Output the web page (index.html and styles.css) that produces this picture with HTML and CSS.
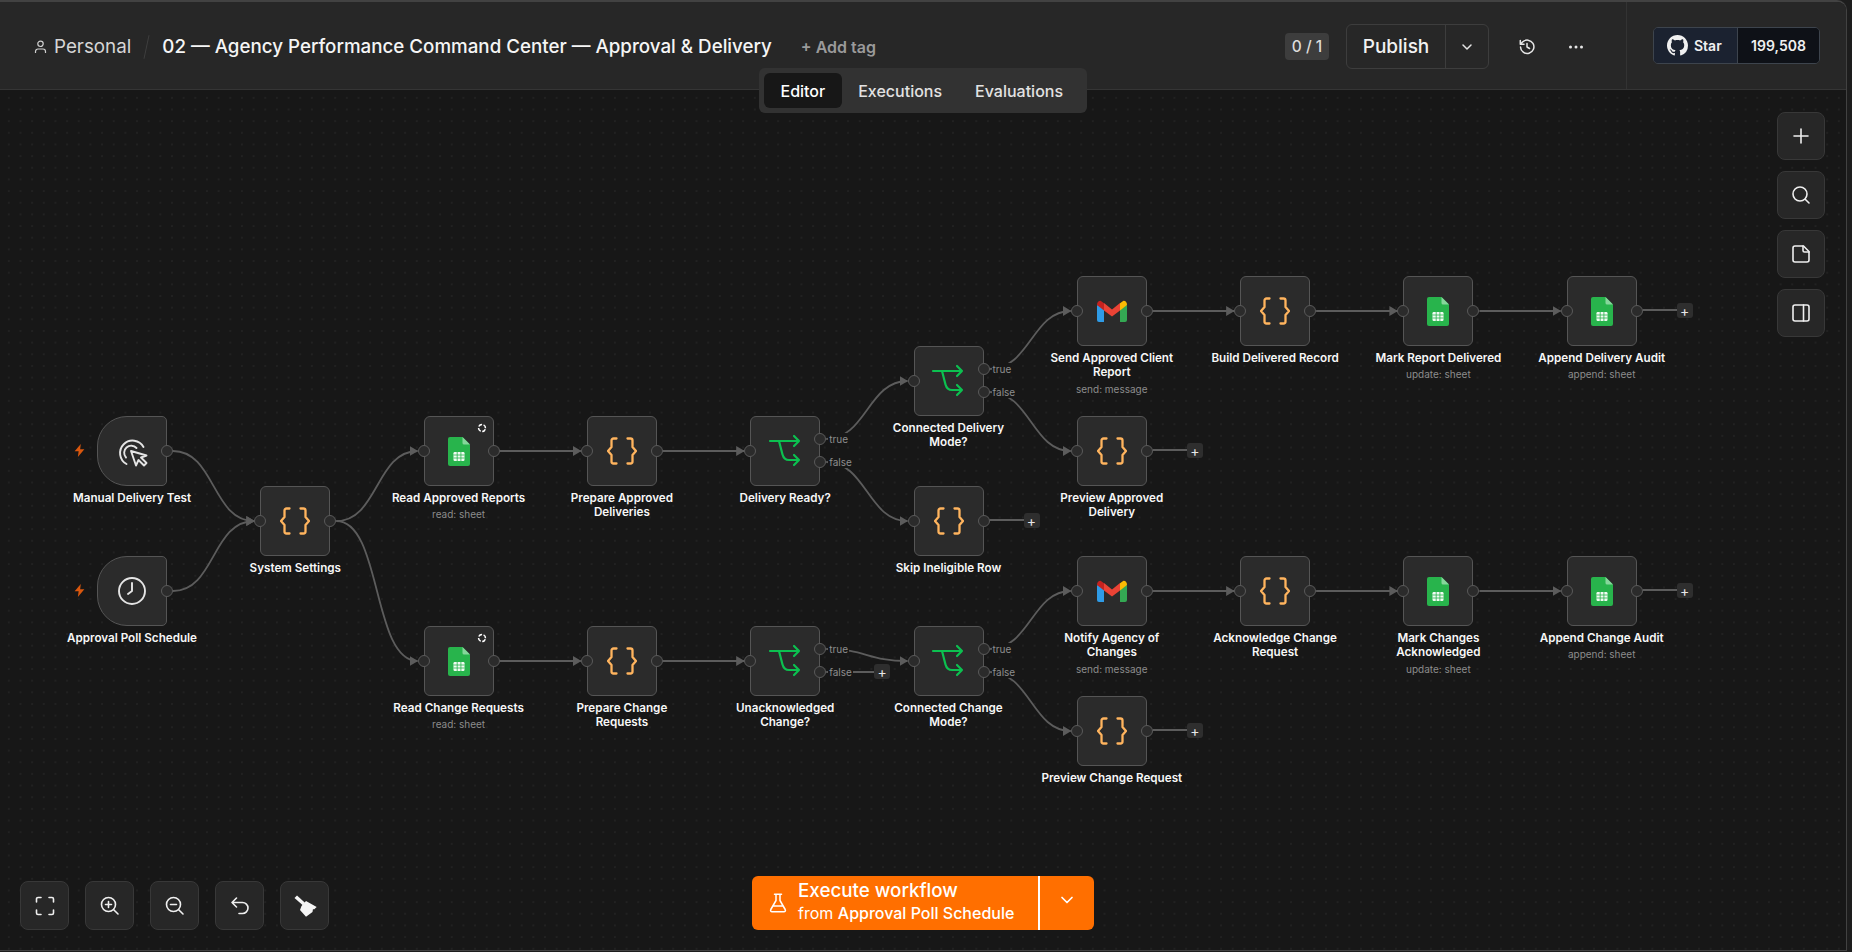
FILE: index.html
```html
<!DOCTYPE html>
<html lang="en">
<head>
    <meta charset="UTF-8">
    <title>02 — Agency Performance Command Center — Approval &amp; Delivery</title>
    <link rel="stylesheet" href="styles.css">
</head>
<body>
    <!-- shared node icons -->
    <svg class="sprite" aria-hidden="true">
        <symbol id="i-code" viewBox="0 0 30 28">
            <path d="M9.500 1.500H6.500a2 2 0 0 0-2 2V10L1 14l3.500 4v6.500a2 2 0 0 0 2 2h3M20.500 1.500h3a2 2 0 0 1 2 2V10L29 14l-3.500 4v6.500a2 2 0 0 1-2 2h-3" fill="none" stroke="#ffb45e" stroke-width="2.300" stroke-linecap="round" stroke-linejoin="round"/>
        </symbol>
        <symbol id="i-if" viewBox="0 0 70 70">
            <path d="M20 25H49M44 20l5 5-5 5M29 25l3.500 13.500Q34 44 39 44H49M44 39l5 5-5 5" fill="none" stroke="#0cc050" stroke-width="2.200" stroke-linecap="round" stroke-linejoin="round"/>
        </symbol>
        <symbol id="i-sheet" viewBox="0 0 22 29">
            <path d="M2 0H14.500L22 7.500V27a2 2 0 0 1-2 2H2a2 2 0 0 1-2-2V2a2 2 0 0 1 2-2Z" fill="#28b44c"/>
            <path d="M14.500 0L22 7.500H16a1.500 1.500 0 0 1-1.500-1.500Z" fill="#86d69b"/>
            <rect x="5.500" y="15" width="11" height="9" rx="1.200" fill="#f2fbf4"/>
            <path d="M5.500 18H16.500M5.500 21H16.500M9.200 15V24M12.900 15V24" stroke="#28b44c" stroke-width="0.800"/>
        </symbol>
        <symbol id="i-gmail" viewBox="0 0 30 22">
            <path d="M0 5V20a2 2 0 0 0 2 2H7V8Z" fill="#2f9be6"/>
            <path d="M30 5V20a2 2 0 0 1-2 2H23V8Z" fill="#34a853"/>
            <path d="M7 3L15 9.500 23 3V10.500L15 16.500 7 10.500Z" fill="#ea4335"/>
            <path d="M0 5Q0 1 3.500 .8L7 3.200V10.500Z" fill="#c5221f"/>
            <path d="M23 3.200L26.500 .8Q30 1 30 5L23 10.500Z" fill="#fbbc04"/>
        </symbol>
        <symbol id="i-bolt" viewBox="0 0 10 12">
            <path d="M6.200 0L.5 6.800H4.200L3.500 12 9.500 4.800H5.600Z" fill="#d9570e"/>
        </symbol>
        <symbol id="i-poll" viewBox="0 0 10 10">
            <circle cx="5" cy="5" r="3.500" fill="none" stroke="#fff" stroke-width="1.500" stroke-dasharray="3.900 1.600" transform="rotate(20 5 5)"/>
        </symbol>
    </svg>

    <div class="app">
        <header class="topbar">
            <div class="crumbs">
                <svg class="person" width="13" height="14" viewBox="0 0 13 14" fill="none" stroke="#cfcfcf" stroke-width="1.200"><circle cx="6.500" cy="3.800" r="2.700"/><path d="M1.500 13v-1.500a2.500 2.500 0 0 1 2.500-2.500h5a2.500 2.500 0 0 1 2.500 2.500V13"/></svg>
                <span class="project">Personal</span>
                <span class="slash"></span>
                <span class="title">02 — Agency Performance Command Center — Approval &amp; Delivery</span>
                <span class="add-tag">+ Add tag</span>
            </div>
            <div class="actions">
                <span class="counter">0 / 1</span>
                <div class="publish">
                    <span class="publish-label">Publish</span>
                    <span class="publish-more">
                        <svg width="14" height="14" viewBox="0 0 14 14" fill="none" stroke="#e6e6e6" stroke-width="1.500" stroke-linecap="round" stroke-linejoin="round"><path d="M3 5l4 4 4-4"/></svg>
                    </span>
                </div>
                <svg class="history" width="18" height="18" viewBox="0 0 18 18" fill="none" stroke="#e6e6e6" stroke-width="1.500" stroke-linecap="round" stroke-linejoin="round"><path d="M2.500 9A6.700 6.700 0 1 0 4.500 4L2.300 6.200M2.300 2.500v3.700H6M9 5.500V9l2.500 1.500"/></svg>
                <svg class="dots" width="16" height="4" viewBox="0 0 16 4" fill="#e6e6e6"><circle cx="2.500" cy="2" r="1.500"/><circle cx="8" cy="2" r="1.500"/><circle cx="13.500" cy="2" r="1.500"/></svg>
            </div>
            <div class="star-wrap">
                <div class="gh-star">
                    <span class="gh-left">
                        <svg width="21" height="21" viewBox="0 0 16 16" fill="#f0f0f0"><path d="M8 0C3.580 0 0 3.580 0 8c0 3.540 2.290 6.530 5.470 7.590.4.070.55-.17.55-.38 0-.19-.01-.82-.01-1.490-2.010.37-2.530-.49-2.690-.94-.09-.23-.48-.94-.82-1.130-.28-.15-.68-.52-.01-.53.63-.01 1.080.58 1.230.82.72 1.210 1.870.87 2.330.66.07-.52.28-.87.51-1.070-1.780-.2-3.640-.89-3.640-3.950 0-.87.31-1.590.82-2.150-.08-.2-.36-1.020.08-2.120 0 0 .67-.21 2.200.82.64-.18 1.320-.27 2-.27.68 0 1.360.09 2 .27 1.530-1.040 2.200-.82 2.200-.82.44 1.100.16 1.920.08 2.120.51.56.82 1.270.82 2.150 0 3.070-1.870 3.750-3.650 3.950.29.25.54.73.54 1.480 0 1.070-.01 1.930-.01 2.200 0 .21.15.46.55.38A8.013 8.013 0 0016 8c0-4.420-3.580-8-8-8z"/></svg>
                        Star
                    </span>
                    <span class="gh-count">199,508</span>
                </div>
            </div>
        </header>

        <nav class="tabs">
            <span class="tab active">Editor</span>
            <span class="tab">Executions</span>
            <span class="tab">Evaluations</span>
        </nav>

        <main class="canvas">
            <!-- connections, drawn in page coordinates -->
            <svg class="edges" viewBox="0 90 1846 860">
                <defs>
                    <marker id="arrow" markerUnits="userSpaceOnUse" markerWidth="9" markerHeight="11" refX="8" refY="5.500" orient="auto">
                        <path d="M0 .5L8.500 5.500 0 10.500Z" fill="#5c5c5c"/>
                    </marker>
                </defs>
                <g class="edge-arrow">
                    <path d="M173 451C215 451 212 521 254.300 521"/>
                    <path d="M173 591C215 591 212 521 254.300 521"/>
                    <path d="M336.300 521C378 521 376 451 417.600 451"/>
                    <path d="M336.300 521C382 521 372 661 417.600 661"/>
                    <path d="M499.600 451H580.900"/>
                    <path d="M662.900 451H744.200"/>
                    <path d="M826.200 439C866 439 868 381 907.500 381"/>
                    <path d="M826.200 462C866 462 868 521 907.500 521"/>
                    <path d="M989.500 369C1030 369 1032 311 1070.800 311"/>
                    <path d="M989.500 392C1030 392 1032 451 1070.800 451"/>
                    <path d="M1152.800 311H1234.100"/>
                    <path d="M1316.100 311H1397.400"/>
                    <path d="M1479.400 311H1560.700"/>
                    <path d="M499.600 661H580.900"/>
                    <path d="M662.900 661H744.200"/>
                    <path d="M826.200 649C866 649 868 661 907.500 661"/>
                    <path d="M989.500 649C1030 649 1032 591 1070.800 591"/>
                    <path d="M989.500 672C1030 672 1032 731 1070.800 731"/>
                    <path d="M1152.800 591H1234.100"/>
                    <path d="M1316.100 591H1397.400"/>
                    <path d="M1479.400 591H1560.700"/>
                </g>
                <g class="edge-stub">
                    <path d="M1642.700 310H1678"/>
                    <path d="M1152.800 450H1188"/>
                    <path d="M989.500 520H1024"/>
                    <path d="M826.200 672H875"/>
                    <path d="M1642.700 590H1678"/>
                    <path d="M1152.800 730H1188"/>
                </g>
            </svg>

            <!-- triggers -->
            <div class="node c0 r2">
                <svg class="bolt"><use href="#i-bolt"/></svg>
                <div class="box trigger">
                    <svg class="ico-click" width="30" height="29" viewBox="0 0 30 29" fill="none" stroke="#e4e4e4" stroke-width="1.900" stroke-linecap="round" stroke-linejoin="round">
                        <path d="M8.500 26A12.500 12.500 0 1 1 25.500 9"/>
                        <path d="M8 19.500A7 7 0 1 1 18.500 10"/>
                        <path d="M13 13L18 27.500 20.500 22 26 27.500 28.500 25 23 19.500 28.500 17.500Z"/>
                    </svg>
                </div>
                <span class="port out"></span>
                <div class="label">Manual Delivery Test</div>
            </div>
            <div class="node c0 r4">
                <svg class="bolt"><use href="#i-bolt"/></svg>
                <div class="box trigger">
                    <svg width="28" height="28" viewBox="0 0 28 28" fill="none" stroke="#e4e4e4" stroke-width="1.900" stroke-linecap="round" stroke-linejoin="round">
                        <circle cx="14" cy="14" r="13"/>
                        <path d="M14 6V14L10 17"/>
                    </svg>
                </div>
                <span class="port out"></span>
                <div class="label">Approval Poll Schedule</div>
            </div>

            <div class="node c1 r3">
                <span class="port in"></span>
                <div class="box"><svg class="ico-code"><use href="#i-code"/></svg></div>
                <span class="port out"></span>
                <div class="label">System Settings</div>
            </div>

            <!-- approved reports branch -->
            <div class="node c2 r2">
                <span class="port in"></span>
                <div class="box">
                    <svg class="ico-sheet"><use href="#i-sheet"/></svg>
                    <svg class="poll"><use href="#i-poll"/></svg>
                </div>
                <span class="port out"></span>
                <div class="label">Read Approved Reports<div class="sub">read: sheet</div></div>
            </div>
            <div class="node c3 r2">
                <span class="port in"></span>
                <div class="box"><svg class="ico-code"><use href="#i-code"/></svg></div>
                <span class="port out"></span>
                <div class="label">Prepare Approved Deliveries</div>
            </div>
            <div class="node c4 r2">
                <span class="port in"></span>
                <div class="box"><svg class="ico-if"><use href="#i-if"/></svg></div>
                <span class="port out-true"></span><span class="port out-false"></span>
                <span class="branch is-true">true</span><span class="branch is-false">false</span>
                <div class="label">Delivery Ready?</div>
            </div>
            <div class="node c5 r1">
                <span class="port in"></span>
                <div class="box"><svg class="ico-if"><use href="#i-if"/></svg></div>
                <span class="port out-true"></span><span class="port out-false"></span>
                <span class="branch is-true">true</span><span class="branch is-false">false</span>
                <div class="label">Connected Delivery Mode?</div>
            </div>
            <div class="node c5 r3">
                <span class="port in"></span>
                <div class="box"><svg class="ico-code"><use href="#i-code"/></svg></div>
                <span class="port out"></span>
                <span class="plus">+</span>
                <div class="label">Skip Ineligible Row</div>
            </div>
            <div class="node c6 r0">
                <span class="port in"></span>
                <div class="box"><svg class="ico-gmail"><use href="#i-gmail"/></svg></div>
                <span class="port out"></span>
                <div class="label">Send Approved Client Report<div class="sub">send: message</div></div>
            </div>
            <div class="node c6 r2">
                <span class="port in"></span>
                <div class="box"><svg class="ico-code"><use href="#i-code"/></svg></div>
                <span class="port out"></span>
                <span class="plus">+</span>
                <div class="label">Preview Approved Delivery</div>
            </div>
            <div class="node c7 r0">
                <span class="port in"></span>
                <div class="box"><svg class="ico-code"><use href="#i-code"/></svg></div>
                <span class="port out"></span>
                <div class="label">Build Delivered Record</div>
            </div>
            <div class="node c8 r0">
                <span class="port in"></span>
                <div class="box"><svg class="ico-sheet"><use href="#i-sheet"/></svg></div>
                <span class="port out"></span>
                <div class="label">Mark Report Delivered<div class="sub">update: sheet</div></div>
            </div>
            <div class="node c9 r0">
                <span class="port in"></span>
                <div class="box"><svg class="ico-sheet"><use href="#i-sheet"/></svg></div>
                <span class="port out"></span>
                <span class="plus">+</span>
                <div class="label">Append Delivery Audit<div class="sub">append: sheet</div></div>
            </div>

            <!-- change requests branch -->
            <div class="node c2 r5">
                <span class="port in"></span>
                <div class="box">
                    <svg class="ico-sheet"><use href="#i-sheet"/></svg>
                    <svg class="poll"><use href="#i-poll"/></svg>
                </div>
                <span class="port out"></span>
                <div class="label">Read Change Requests<div class="sub">read: sheet</div></div>
            </div>
            <div class="node c3 r5">
                <span class="port in"></span>
                <div class="box"><svg class="ico-code"><use href="#i-code"/></svg></div>
                <span class="port out"></span>
                <div class="label">Prepare Change Requests</div>
            </div>
            <div class="node c4 r5">
                <span class="port in"></span>
                <div class="box"><svg class="ico-if"><use href="#i-if"/></svg></div>
                <span class="port out-true"></span><span class="port out-false"></span>
                <span class="branch is-true">true</span><span class="branch is-false">false</span>
                <span class="plus plus-false">+</span>
                <div class="label">Unacknowledged Change?</div>
            </div>
            <div class="node c5 r5">
                <span class="port in"></span>
                <div class="box"><svg class="ico-if"><use href="#i-if"/></svg></div>
                <span class="port out-true"></span><span class="port out-false"></span>
                <span class="branch is-true">true</span><span class="branch is-false">false</span>
                <div class="label">Connected Change Mode?</div>
            </div>
            <div class="node c6 r4">
                <span class="port in"></span>
                <div class="box"><svg class="ico-gmail"><use href="#i-gmail"/></svg></div>
                <span class="port out"></span>
                <div class="label">Notify Agency of Changes<div class="sub">send: message</div></div>
            </div>
            <div class="node c6 r6">
                <span class="port in"></span>
                <div class="box"><svg class="ico-code"><use href="#i-code"/></svg></div>
                <span class="port out"></span>
                <span class="plus">+</span>
                <div class="label">Preview Change Request</div>
            </div>
            <div class="node c7 r4">
                <span class="port in"></span>
                <div class="box"><svg class="ico-code"><use href="#i-code"/></svg></div>
                <span class="port out"></span>
                <div class="label">Acknowledge Change Request</div>
            </div>
            <div class="node c8 r4">
                <span class="port in"></span>
                <div class="box"><svg class="ico-sheet"><use href="#i-sheet"/></svg></div>
                <span class="port out"></span>
                <div class="label">Mark Changes Acknowledged<div class="sub">update: sheet</div></div>
            </div>
            <div class="node c9 r4">
                <span class="port in"></span>
                <div class="box"><svg class="ico-sheet"><use href="#i-sheet"/></svg></div>
                <span class="port out"></span>
                <span class="plus">+</span>
                <div class="label">Append Change Audit<div class="sub">append: sheet</div></div>
            </div>

            <!-- side tools -->
            <div class="tools-right">
                <button class="tool"><svg width="20" height="20" viewBox="0 0 20 20"><path d="M10 3V17M3 10H17"/></svg></button>
                <button class="tool"><svg width="20" height="20" viewBox="0 0 20 20"><circle cx="9" cy="9" r="7"/><path d="M14.200 14.200L18 18"/></svg></button>
                <button class="tool"><svg width="20" height="20" viewBox="0 0 20 20"><path d="M4 2H12.500L18 7.500V16a2 2 0 0 1-2 2H4a2 2 0 0 1-2-2V4a2 2 0 0 1 2-2Z"/><path d="M12 2V6.500a1.500 1.500 0 0 0 1.500 1.500H18"/></svg></button>
                <button class="tool"><svg width="20" height="20" viewBox="0 0 20 20"><rect x="2" y="2" width="16" height="16" rx="2"/><path d="M12.500 2V18"/></svg></button>
            </div>

            <div class="tools-left">
                <button class="tool"><svg width="20" height="20" viewBox="0 0 20 20"><path d="M1.500 6V3a1.500 1.500 0 0 1 1.500-1.500H6M14 1.500H17A1.500 1.500 0 0 1 18.500 3V6M18.500 14V17A1.500 1.500 0 0 1 17 18.500H14M6 18.500H3A1.500 1.500 0 0 1 1.500 17V14"/></svg></button>
                <button class="tool"><svg width="20" height="20" viewBox="0 0 20 20"><circle cx="8.500" cy="8.500" r="7"/><path d="M13.700 13.700L18 18M8.500 5.500V11.500M5.500 8.500H11.500"/></svg></button>
                <button class="tool"><svg width="20" height="20" viewBox="0 0 20 20"><circle cx="8.500" cy="8.500" r="7"/><path d="M13.700 13.700L18 18M5.500 8.500H11.500"/></svg></button>
                <button class="tool"><svg width="20" height="20" viewBox="0 0 20 20"><path d="M6.500 2L2 6.500 6.500 11M2 6.500H12.500a5 5 0 0 1 0 11H9"/></svg></button>
                <button class="tool"><svg width="24" height="24" viewBox="0 0 24 24"><path class="solid" d="M1.500 4L4 1.500 12 8.800 9.800 11.300Z"/><path class="solid" d="M8.500 12L13 7 23.700 13 21 15.500 20 15 19.500 18 13 22.800 7 16Z"/></svg></button>
            </div>

            <div class="execute">
                <div class="execute-main">
                    <svg width="18" height="20" viewBox="0 0 18 20" fill="none" stroke="#fff" stroke-width="1.500" stroke-linecap="round" stroke-linejoin="round"><path d="M5.500 1.200H12.500M7 1.200V7.500L1.800 16.500A1.500 1.500 0 0 0 3.100 18.800H14.900A1.500 1.500 0 0 0 16.200 16.500L11 7.500V1.200M4 13H14"/></svg>
                    <div class="execute-text">
                        <div class="execute-title">Execute workflow</div>
                        <div class="execute-sub">from <b>Approval Poll Schedule</b></div>
                    </div>
                </div>
                <div class="execute-more">
                    <svg width="14" height="14" viewBox="0 0 14 14" fill="none" stroke="#fff" stroke-width="1.700" stroke-linecap="round" stroke-linejoin="round"><path d="M2 4.500l5 5 5-5"/></svg>
                </div>
            </div>
        </main>
    </div>
</body>
</html>
```

FILE: styles.css
```css
* {
    box-sizing: border-box;
}
html, body {
    margin: 0;
    height: 100%;
    overflow: hidden;
}
body {
    background: #1d1d1d;
    font-family: Inter, "Noto Sans", sans-serif;
    color: #f2f2f2;
}
.sprite {
    display: none;
}
.app {
    position: relative;
    width: 1847px;
    height: 951px;
    display: flex;
    flex-direction: column;
    border-top: 2px solid #424242;
    border-right: 1px solid #424242;
    border-bottom: 1px solid #424242;
    border-top-right-radius: 10px;
    overflow: hidden;
}

/* top bar */
.topbar {
    flex: none;
    height: 88px;
    display: flex;
    align-items: center;
    background: #272727;
    border-bottom: 1px solid #353535;
}
.crumbs {
    display: flex;
    align-items: center;
    padding: 2px 0 0 34px;
    flex: 1;
}
.person {
    margin-right: 7px;
}
.project {
    font-size: 18.8px;
    color: #d6d6d6;
}
.slash {
    width: 1px;
    height: 24px;
    margin: 0 15px 0 15px;
    background: #3f3f3f;
    transform: rotate(12deg);
}
.title {
    font-size: 18.75px;
    font-weight: 500;
    color: #f5f5f5;
    white-space: nowrap;
}
.add-tag {
    margin-left: 29px;
    font-size: 16px;
    font-weight: 600;
    color: #9a9a9a;
}
.actions {
    display: flex;
    align-items: center;
    height: 100%;
    padding-top: 2px;
    margin-right: 42px;
}
.counter {
    width: 44px;
    height: 27px;
    margin-right: 17px;
    display: flex;
    align-items: center;
    justify-content: center;
    border-radius: 4px;
    background: #3d3d3d;
    font-size: 15.5px;
    font-weight: 500;
    color: #dcdcdc;
}
.publish {
    width: 143px;
    height: 45px;
    display: flex;
    border: 1px solid #3d3d3d;
    border-radius: 6px;
}
.publish-label {
    width: 99px;
    display: flex;
    align-items: center;
    justify-content: center;
    font-size: 19px;
    font-weight: 500;
    border-right: 1px solid #3d3d3d;
}
.publish-more {
    flex: 1;
    display: flex;
    align-items: center;
    justify-content: center;
}
.history {
    margin-left: 29px;
}
.dots {
    margin-left: 32px;
}
.star-wrap {
    height: 100%;
    display: flex;
    align-items: center;
    padding: 0 26px 0 26px;
    border-left: 1px solid #333;
}
.gh-star {
    width: 167px;
    height: 37px;
    display: flex;
    border: 1px solid #3d444d;
    border-radius: 5px;
    overflow: hidden;
    font-size: 14px;
    font-weight: 600;
    color: #f0f0f0;
}
.gh-left {
    width: 84px;
    display: flex;
    align-items: center;
    gap: 6px;
    padding-left: 13px;
    background: #1b2230;
    border-right: 1px solid #3d444d;
}
.gh-count {
    flex: 1;
    display: flex;
    align-items: center;
    justify-content: center;
    background: #0e1117;
}

/* floating tab switch */
.tabs {
    position: absolute;
    left: 759px;
    top: 66px;
    z-index: 5;
    width: 328px;
    height: 45px;
    display: flex;
    align-items: center;
    padding: 0 5px;
    background: #323232;
    border-radius: 6px;
}
.tab {
    height: 35px;
    padding: 0 16.5px;
    display: flex;
    align-items: center;
    font-size: 16px;
    font-weight: 500;
    color: #e2e2e2;
    border-radius: 6px;
}
.tab.active {
    background: #171717;
    color: #fff;
}

/* canvas */
.canvas {
    position: relative;
    flex: 1;
    background-color: #171717;
    background-image: radial-gradient(#292929 0.6px, transparent 0.8px);
    background-size: 11.67px 11.67px;
    background-position: 3px 2px;
}
.edges {
    position: absolute;
    left: 0;
    top: 0;
    width: 1846px;
    height: 860px;
}
.edges path {
    fill: none;
    stroke: #5c5c5c;
    stroke-width: 1.8;
}
.edges marker path {
    fill: #5c5c5c;
    stroke: none;
}
.edge-arrow path {
    marker-end: url(#arrow);
}

.c0 { left: 97px; }
.c1 { left: 260.3px; }
.c2 { left: 423.6px; }
.c3 { left: 586.9px; }
.c4 { left: 750.2px; }
.c5 { left: 913.5px; }
.c6 { left: 1076.8px; }
.c7 { left: 1240.1px; }
.c8 { left: 1403.4px; }
.c9 { left: 1566.7px; }
.r0 { top: 186px; }
.r1 { top: 256px; }
.r2 { top: 326px; }
.r3 { top: 396px; }
.r4 { top: 466px; }
.r5 { top: 536px; }
.r6 { top: 606px; }

.node {
    position: absolute;
    width: 70px;
    height: 70px;
}
.box {
    position: relative;
    width: 100%;
    height: 100%;
    display: flex;
    align-items: center;
    justify-content: center;
    background: #2b2b2b;
    border: 1.5px solid #555;
    border-radius: 6px;
}
.box.trigger {
    border-radius: 30px 5px 5px 30px;
}
.ico-click {
    margin: 2px 0 0 2px;
}
.ico-code {
    width: 30px;
    height: 28px;
}
.ico-if {
    position: absolute;
    left: -1.5px;
    top: -1.5px;
    width: 70px;
    height: 70px;
}
.ico-sheet {
    width: 22px;
    height: 29px;
}
.ico-gmail {
    width: 30px;
    height: 22px;
}
.bolt {
    position: absolute;
    left: -23.5px;
    top: 27.5px;
    width: 11px;
    height: 13px;
}
.poll {
    position: absolute;
    right: 6px;
    top: 5.5px;
    width: 10px;
    height: 10px;
}
.port {
    position: absolute;
    width: 12px;
    height: 12px;
    border-radius: 50%;
    background: #2b2b2b;
    border: 1.4px solid #5a5a5a;
}
.port.in {
    left: -6px;
    top: 29px;
    z-index: 1;
}
.port.out {
    right: -6px;
    top: 29px;
}
.port.out-true {
    right: -6px;
    top: 17px;
}
.port.out-false {
    right: -6px;
    top: 40px;
}
.branch {
    position: absolute;
    left: 78px;
    padding: 0 1px;
    background: #171717;
    font-size: 10px;
    line-height: 12px;
    color: #8e8e8e;
}
.branch.is-true {
    top: 17px;
}
.branch.is-false {
    top: 40px;
}
.plus {
    position: absolute;
    left: 110px;
    top: 27px;
    width: 16px;
    height: 15px;
    display: flex;
    align-items: center;
    justify-content: center;
    background: #2e2e2e;
    border-radius: 3px;
    font-size: 14px;
    line-height: 1;
    color: #e8e8e8;
}
.plus.plus-false {
    left: 124px;
    top: 38px;
}
.label {
    position: absolute;
    top: 100%;
    left: 50%;
    width: 143px;
    margin-top: 5px;
    transform: translateX(-50%);
    text-align: center;
    font-size: 11.67px;
    font-weight: 600;
    line-height: 14.3px;
    color: #f7f7f7;
}
.sub {
    margin-top: 3px;
    font-size: 10px;
    font-weight: 400;
    line-height: 12px;
    color: #8c8c8c;
}

/* tool buttons */
.tools-right {
    position: absolute;
    right: 21px;
    top: 22px;
    display: flex;
    flex-direction: column;
    gap: 11px;
}
.tools-left {
    position: absolute;
    left: 20px;
    bottom: 20px;
    display: flex;
    gap: 16px;
}
.tool {
    width: 48px;
    height: 48px;
    padding: 0;
    display: flex;
    align-items: center;
    justify-content: center;
    background: #272727;
    border: 1px solid #383838;
    border-radius: 8px;
}
.tools-left .tool {
    width: 49px;
    height: 49px;
}
.tool svg {
    fill: none;
    stroke: #efefef;
    stroke-width: 1.6;
    stroke-linecap: round;
    stroke-linejoin: round;
}
.tool .solid {
    fill: #f5f5f5;
    stroke: none;
}

/* execute button */
.execute {
    position: absolute;
    left: 752px;
    top: 786px;
    width: 342px;
    height: 54px;
    display: flex;
    background: #ff6f00;
    border-radius: 6px;
    color: #fff;
}
.execute-main {
    flex: 1;
    display: flex;
    align-items: center;
    gap: 11px;
    padding-left: 17px;
    border-right: 2px solid #fff;
}
.execute-text {
    margin-top: -3px;
}
.execute-title {
    font-size: 18.8px;
    font-weight: 500;
    line-height: 23px;
}
.execute-sub {
    font-size: 16px;
    font-weight: 400;
    line-height: 22px;
}
.execute-sub b {
    font-weight: 500;
}
.execute-more {
    width: 54px;
    display: flex;
    align-items: center;
    justify-content: center;
    padding-bottom: 6px;
}
```
